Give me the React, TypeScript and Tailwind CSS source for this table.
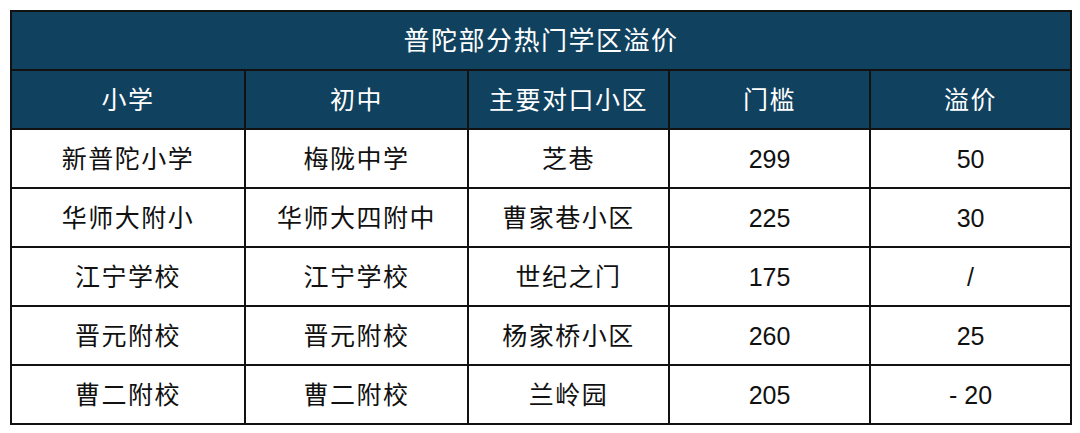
const rows = [
  ["新普陀小学", "梅陇中学", "芝巷", "299", "50"],
  ["华师大附小", "华师大四附中", "曹家巷小区", "225", "30"],
  ["江宁学校", "江宁学校", "世纪之门", "175", "/"],
  ["晋元附校", "晋元附校", "杨家桥小区", "260", "25"],
  ["曹二附校", "曹二附校", "兰岭园", "205", "- 20"],
];

const headers = ["小学", "初中", "主要对口小区", "门槛", "溢价"];

const font = "font-['Liberation_Sans','Noto_Sans_CJK_SC',sans-serif]";

export default function App() {
  return (
    <div className={`w-[1080px] h-[433px] bg-white pt-[10px] pl-[10px] ${font}`}>
      <table className="w-[1060px] table-fixed border-collapse border-2 border-[#1a1a1a]">
        <colgroup>
          <col className="w-[234px]" />
          <col className="w-[223px]" />
          <col className="w-[201px]" />
          <col className="w-[201px]" />
          <col className="w-[201px]" />
        </colgroup>
        <thead>
          <tr className="h-[59px] bg-[#10425f]">
            <th colSpan={5} className="border-2 border-[#111] pt-[2px] text-white text-[26px] font-normal tracking-[1.5px] text-center">
              普陀部分热门学区溢价
            </th>
          </tr>
          <tr className="h-[59px] bg-[#10425f]">
            {headers.map((h) => (
              <th key={h} className="border-2 border-[#111] pt-[2px] text-white text-[25px] font-normal tracking-[1.5px] text-center">
                {h}
              </th>
            ))}
          </tr>
        </thead>
        <tbody>
          {rows.map((r, i) => (
            <tr key={i} className="h-[59px]">
              {r.map((c, j) =>
                j < 3 ? (
                  <td key={j} className="border-2 border-[#111] pt-[3px] text-center text-[25px] text-[#111] tracking-[1.5px]">
                    {c}
                  </td>
                ) : (
                  <td key={j} className="border-2 border-[#111] pt-[3px] text-center text-[25px] text-[#111]">
                    {c}
                  </td>
                )
              )}
            </tr>
          ))}
        </tbody>
      </table>
    </div>
  );
}
